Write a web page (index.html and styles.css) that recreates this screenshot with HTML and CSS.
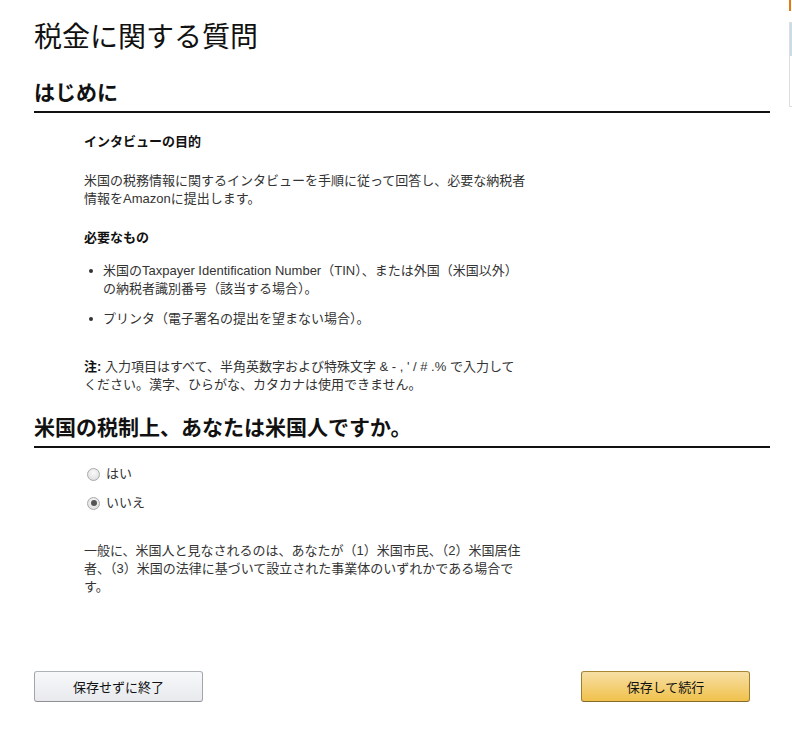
FILE: index.html
```html
<!DOCTYPE html>
<html lang="ja">
<head>
<meta charset="utf-8">
<title>税金に関する質問</title>
<link rel="stylesheet" href="styles.css">
</head>
<body>
<div class="edge">
  <div class="edge-tab"></div>
  <div class="edge-box"></div>
</div>
<main class="page">
  <h1 class="title">税金に関する質問</h1>

  <section class="section">
    <h2 class="section-head">はじめに</h2>
    <div class="body">
      <p class="label">インタビューの目的</p>
      <p class="text gap-21">米国の税務情報に関するインタビューを手順に従って回答し、必要な納税者情報をAmazonに提出します。</p>
      <p class="label gap-21">必要なもの</p>
      <ul class="list">
        <li class="item">米国のTaxpayer Identification Number（TIN）、または外国（米国以外）<br>の納税者識別番号（該当する場合）。</li>
        <li class="item item-2">プリンタ（電子署名の提出を望まない場合）。</li>
      </ul>
      <p class="text note"><b>注:</b> 入力項目はすべて、半角英数字および特殊文字 &amp; - , ' / # .% で入力して<br>ください。漢字、ひらがな、カタカナは使用できません。</p>
    </div>
  </section>

  <section class="section section-2">
    <h2 class="section-head">米国の税制上、あなたは米国人ですか。</h2>
    <div class="body">
      <label class="radio-row"><input type="radio" name="us" class="radio"><span>はい</span></label>
      <label class="radio-row radio-row-2"><input type="radio" name="us" class="radio" checked><span>いいえ</span></label>
      <p class="text explain">一般に、米国人と見なされるのは、あなたが（1）米国市民、（2）米国居住者、（3）米国の法律に基づいて設立された事業体のいずれかである場合です。</p>
    </div>
  </section>

  <div class="actions">
    <button class="btn btn-secondary" type="button">保存せずに終了</button>
    <button class="btn btn-primary" type="button">保存して続行</button>
  </div>
</main>
</body>
</html>
```

FILE: styles.css
```css
html, body {
  margin: 0;
  padding: 0;
  background: #fff;
}
body {
  font-family: "Liberation Sans", "Noto Sans CJK JP", sans-serif;
  color: #333;
  font-size: 13px;
  line-height: 18px;
}
.page {
  width: 736px;
  padding: 20px 0 0 34px;
}
.title {
  margin: 0;
  font-size: 28px;
  line-height: 36px;
  font-weight: normal;
  color: #111;
}
.section {
  margin-top: 23px;
}
.section-2 {
  margin-top: 20px;
}
.section-head {
  margin: 0;
  font-size: 21px;
  line-height: 28px;
  font-weight: bold;
  color: #111;
  padding-bottom: 4px;
  border-bottom: 2px solid #111;
}
.body {
  padding-left: 50px;
  width: 448px;
}
.section .body {
  padding-top: 20px;
}
.section-2 .body {
  padding-top: 16px;
}
.label {
  margin: 0;
  font-weight: bold;
  color: #111;
}
.text {
  margin: 0;
}
.gap-21 {
  margin-top: 21px;
}
.list {
  list-style: none;
  margin: 15px 0 0;
  padding: 0;
}
.item {
  position: relative;
  padding-left: 19px;
}
.item::before {
  content: "";
  position: absolute;
  left: 5px;
  top: 7px;
  width: 4px;
  height: 4px;
  border-radius: 50%;
  background: #333;
}
.item-2 {
  margin-top: 12px;
}
.note {
  margin-top: 30px;
}
.note b {
  color: #111;
}
.radio-row {
  display: flex;
  align-items: center;
  gap: 6px;
  height: 20px;
  padding-left: 3px;
  color: #333;
}
.radio-row-2 {
  margin-top: 9px;
}
.radio {
  appearance: none;
  -webkit-appearance: none;
  margin: 0;
  width: 13px;
  height: 13px;
  border-radius: 50%;
  border: 1px solid #a9a9a9;
  background: radial-gradient(circle at 50% 35%, #fafafa 0%, #e6e6e6 60%, #d6d6d6 100%);
  box-sizing: border-box;
  position: relative;
}
.radio:checked::after {
  content: "";
  position: absolute;
  left: 2.5px;
  top: 2.5px;
  width: 6px;
  height: 6px;
  border-radius: 50%;
  background: #555;
}
.explain {
  margin-top: 29px;
}
.actions {
  display: flex;
  justify-content: space-between;
  width: 716px;
  margin-top: 75px;
}
.btn {
  width: 169px;
  height: 31px;
  border-radius: 3px;
  font-family: "Liberation Sans", "Noto Sans CJK JP", sans-serif;
  font-size: 13px;
  color: #111;
  cursor: pointer;
  padding: 0;
}
.btn-secondary {
  border: 1px solid;
  border-color: #adb1b8 #a2a6ac #8d9096;
  background: linear-gradient(to bottom, #f7f8fa, #e7e9ec);
}
.btn-primary {
  border: 1px solid;
  border-color: #a88734 #9c7e31 #846a29;
  background: linear-gradient(to bottom, #f7dfa5, #f0c14b);
}
.edge {
  position: fixed;
  top: 0;
  right: 0;
  width: 3px;
}
.edge-tab {
  width: 2px;
  margin-left: 0;
  height: 11px;
  background: #e47911;
}
.edge-box {
  margin-top: 11px;
  height: 83px;
  border: 1px solid #ddd;
  border-right: 0;
  background: linear-gradient(to bottom, #c9dde6 0, #c9dde6 33px, #fff 33px);
}
```
